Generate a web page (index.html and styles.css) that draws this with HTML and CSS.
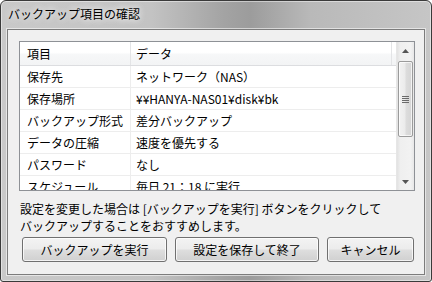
FILE: index.html
```html
<!DOCTYPE html>
<html lang="ja">
<head>
<meta charset="utf-8">
<title>バックアップ項目の確認</title>
<link rel="stylesheet" href="styles.css">
</head>
<body>
<div class="window">
  <div class="titlebar"><span class="title">バックアップ項目の確認</span></div>
  <div class="client">
    <div class="listbox">
      <div class="list">
        <div class="row header"><div class="c1">項目</div><div class="c2">データ</div></div>
        <div class="row"><div class="c1">保存先</div><div class="c2">ネットワーク（NAS）</div></div>
        <div class="row"><div class="c1">保存場所</div><div class="c2">¥¥HANYA-NAS01¥disk¥bk</div></div>
        <div class="row"><div class="c1">バックアップ形式</div><div class="c2">差分バックアップ</div></div>
        <div class="row"><div class="c1">データの圧縮</div><div class="c2">速度を優先する</div></div>
        <div class="row"><div class="c1">パスワード</div><div class="c2">なし</div></div>
        <div class="row"><div class="c1">スケジュール</div><div class="c2">毎日 21：18 に実行</div></div>
      </div>
      <div class="scrollbar">
        <div class="arrow">
          <svg width="7" height="4" viewBox="0 0 7 4"><path d="M0 4 L3.5 0 L7 4 Z" fill="#555"/></svg>
        </div>
        <div class="track">
          <div class="thumb">
            <svg width="7" height="7" viewBox="0 0 7 7"><path d="M0 0.5 H7 M0 2.5 H7 M0 4.5 H7 M0 6.5 H7" stroke="#6a6a6a" stroke-width="1"/></svg>
          </div>
        </div>
        <div class="arrow">
          <svg width="7" height="4" viewBox="0 0 7 4"><path d="M0 0 L3.5 4 L7 0 Z" fill="#555"/></svg>
        </div>
      </div>
    </div>
    <p class="message">設定を変更した場合は [バックアップを実行] ボタンをクリックして<br>バックアップすることをおすすめします。</p>
    <div class="buttons">
      <button class="btn btn-run">バックアップを実行</button>
      <button class="btn btn-save">設定を保存して終了</button>
      <button class="btn btn-cancel">キャンセル</button>
    </div>
  </div>
</div>
</body>
</html>
```
FILE: styles.css
```css
html, body {
  margin: 0;
  padding: 0;
  background: #ffffff;
}

body {
  font-family: "Noto Sans CJK JP", "Noto Sans", sans-serif;
  font-size: 12px;
  color: #000;
}

.window {
  width: 432px;
  height: 282px;
  box-sizing: border-box;
  border: 1px solid #3a3a3a;
  border-radius: 6px 6px 3px 3px;
  background: linear-gradient(90deg, #c9c9c9 0%, #c3c3c3 35%, #a3a3a3 52%, #9c9c9c 58%, #b9b9b9 72%, #c6c6c6 100%);
  box-shadow: inset 0 0 0 1px rgba(255, 255, 255, 0.45);
  padding: 0 6px 6px 6px;
  display: flex;
  flex-direction: column;
}

.titlebar {
  height: 28px;
  display: flex;
  align-items: center;
  padding-left: 1px;
}

.title {
  font-size: 12px;
  line-height: 16px;
  color: #000;
  text-shadow: 0 0 6px rgba(255, 255, 255, 0.9), 0 0 10px rgba(255, 255, 255, 0.6);
  position: relative;
  top: -1px;
}

.client {
  flex: 1;
  border: 1px solid #7c7c7c;
  box-shadow: 0 0 0 1px rgba(255, 255, 255, 0.55);
  background: #f0f0f0;
  padding: 11px 9px 0 11px;
  display: flex;
  flex-direction: column;
}

.listbox {
  height: 150px;
  box-sizing: border-box;
  border: 1px solid #8e9196;
  background: #fff;
  display: flex;
}

.list {
  flex: 1;
  overflow: hidden;
}

.row {
  display: flex;
  height: 22px;
  box-sizing: border-box;
  border-bottom: 1px solid #ededed;
  line-height: 21px;
  white-space: nowrap;
}

.row .c1 {
  width: 111px;
  box-sizing: border-box;
  padding-left: 7px;
  border-right: 1px solid #ededed;
}

.row .c2 {
  width: 261px;
  box-sizing: border-box;
  padding-left: 5px;
}

.row.header {
  height: 24px;
  line-height: 23px;
  background: linear-gradient(#ffffff 0%, #ffffff 45%, #f6f7f8 55%, #f3f4f5 100%);
  border-bottom: 1px solid #dcdde0;
}

.row.header .c1 {
  border-right: 1px solid #e3e4e6;
}

.row.header .c2 {
  border-right: 1px solid #e3e4e6;
}

.scrollbar {
  width: 17px;
  display: flex;
  flex-direction: column;
  background: linear-gradient(90deg, #e2e2e2 0%, #efefef 20%, #f2f2f2 80%, #e8e8e8 100%);
  border-left: 1px solid #e6e6e6;
}

.arrow {
  height: 17px;
  display: flex;
  align-items: center;
  justify-content: center;
}

.track {
  flex: 1;
  padding: 2px 1px 0 1px;
}

.thumb {
  height: 76px;
  box-sizing: border-box;
  border: 1px solid #9b9b9b;
  border-radius: 2px;
  background: linear-gradient(90deg, #f2f2f2 0%, #ebebeb 45%, #dcdcdc 55%, #d5d5d5 100%);
  box-shadow: inset 0 0 0 1px rgba(255, 255, 255, 0.7);
  display: flex;
  align-items: center;
  justify-content: center;
}

.message {
  margin: 9px 0 0 1px;
  line-height: 17px;
  white-space: nowrap;
}

.buttons {
  display: flex;
  gap: 8px;
  margin: 3px 0 0 3px;
}

.btn {
  height: 25px;
  box-sizing: border-box;
  border: 1px solid #707070;
  border-radius: 3px;
  background: linear-gradient(#f3f3f3 0%, #ececec 48%, #dedede 52%, #d0d0d0 100%);
  box-shadow: inset 0 0 0 1px rgba(255, 255, 255, 0.75);
  font-family: inherit;
  font-size: 12px;
  color: #000;
  padding: 0;
  line-height: 22px;
}

.btn-run {
  width: 145px;
}

.btn-save {
  width: 144px;
}

.btn-cancel {
  width: 87px;
}
```
